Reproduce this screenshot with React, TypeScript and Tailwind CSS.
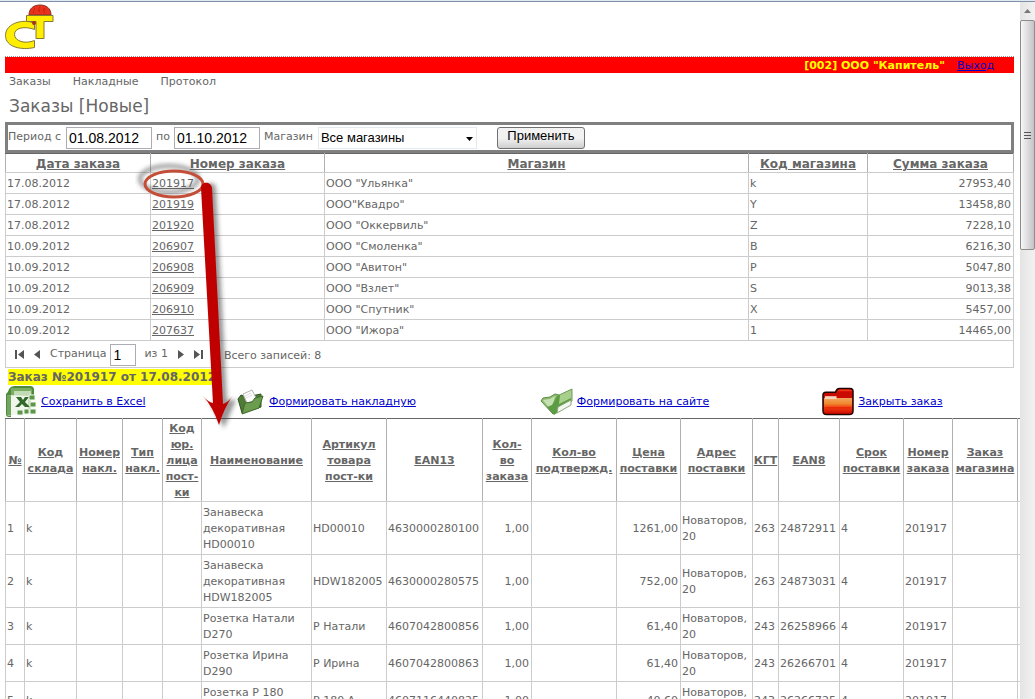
const orders = [
  { date: '17.08.2012', number: '201917', shop: 'ООО "Ульянка"', code: 'k', total: '27953,40' },
  { date: '17.08.2012', number: '201919', shop: 'ООО"Квадро"', code: 'Y', total: '13458,80' },
  { date: '17.08.2012', number: '201920', shop: 'ООО "Оккервиль"', code: 'Z', total: '7228,10' },
  { date: '10.09.2012', number: '206907', shop: 'ООО "Смоленка"', code: 'B', total: '6216,30' },
  { date: '10.09.2012', number: '206908', shop: 'ООО "Авитон"', code: 'P', total: '5047,80' },
  { date: '10.09.2012', number: '206909', shop: 'ООО "Взлет"', code: 'S', total: '9013,38' },
  { date: '10.09.2012', number: '206910', shop: 'ООО "Спутник"', code: 'X', total: '5457,00' },
  { date: '10.09.2012', number: '207637', shop: 'ООО "Ижора"', code: '1', total: '14465,00' },
];

const columns = [
  { title: '№', width: 'w-[19px]' },
  { title: 'Код\nсклада', width: 'w-[52px]' },
  { title: 'Номер\nнакл.', width: 'w-[46px]' },
  { title: 'Тип\nнакл.', width: 'w-[40px]' },
  { title: 'Код\nюр.\nлица\nпост-\nки', width: 'w-[39px]' },
  { title: 'Наименование', width: 'w-[110px]' },
  { title: 'Артикул\nтовара\nпост-ки', width: 'w-[75px]' },
  { title: 'EAN13', width: 'w-[96px]' },
  { title: 'Кол-\nво\nзаказа', width: 'w-[49px]' },
  { title: 'Кол-во\nподтвержд.', width: 'w-[85px]' },
  { title: 'Цена\nпоставки', width: 'w-[64px]' },
  { title: 'Адрес\nпоставки', width: 'w-[72px]' },
  { title: 'КГТ', width: 'w-[26px]' },
  { title: 'EAN8', width: 'w-[61px]' },
  { title: 'Срок\nпоставки', width: 'w-[64px]' },
  { title: 'Номер\nзаказа', width: 'w-[49px]' },
  { title: 'Заказ\nмагазина', width: 'w-[65px]' },
  { title: '', width: 'w-[40px]' },
];

const items = [
  { name: 'Занавеска\nдекоративная\nHD00010', article: 'HD00010', ean: '4630000280100', price: '1261,00', kgt: '263', ean8: '24872911' },
  { name: 'Занавеска\nдекоративная\nHDW182005', article: 'HDW182005', ean: '4630000280575', price: '752,00', kgt: '263', ean8: '24873031' },
  { name: 'Розетка Натали\nD270', article: 'Р Натали', ean: '4607042800856', price: '61,40', kgt: '243', ean8: '26258966' },
  { name: 'Розетка Ирина\nD290', article: 'Р Ирина', ean: '4607042800863', price: '61,40', kgt: '243', ean8: '26266701' },
  { name: 'Розетка Р 180\nA', article: 'Р 180 А', ean: '4607116440825', price: '40,60', kgt: '243', ean8: '26266725' },
];

const th = 'border border-[#b0b0b0] border-t-[#666] border-b-[#ccc] px-0 pt-[2px] pb-0 font-bold text-center align-middle';
const td = 'border border-[#ccc] pl-px pr-[2px] pt-[3px] pb-px align-middle';
const field = "border border-[#abadb3] bg-white px-[2px] font-['Liberation_Sans',sans-serif] text-[14px] text-black";

function Logo() {
  return (
    <svg width="50" height="46" viewBox="0 0 50 46" aria-hidden="true">
      <path d="M24 11C24 4 29 1 35 1s11 3 11 10z" fill="#e8321c" stroke="#8a3020" strokeWidth="1" />
      <path d="M29 5h1m4-1h1m4 1h1m-12 3h1m5-1h1m4 1h1m-7-2h1m4 0h1" stroke="#a01808" strokeWidth="1" />
      <path
        d="M29.500 19.500C21 14.500 0.500 18 0.500 31.500C0.500 43 16 46.500 29.500 43.500V36.500C20 40.500 9.500 37 9.500 30.500C9.500 23.500 20 22 29.500 25.500Z"
        fill="#ffee00"
        stroke="#857a35"
        strokeWidth="1"
      />
      <path d="M21.500 11.500h26.500v6h-9v17h-8v-17H21.500z" fill="#ffee00" stroke="#857a35" strokeWidth="1" />
      <circle cx="29" cy="19" r="2" fill="#a83218" />
    </svg>
  );
}

function ExcelIcon() {
  return (
    <svg width="32" height="32" viewBox="0 0 32 32" aria-hidden="true">
      <path d="M4 3Q6 0 10 0h15q4 0 4 4v8H1z" fill="#4f8a3c" />
      <path d="M7 2h18q2 0 2 2v6H5V5q0-3 2-3z" fill="#79ad62" />
      <path d="M1 8l5-5v28H4q-3 0-3-3z" fill="#4f8a3c" />
      <path d="M9 5h17v22H9z" fill="#c3dbb5" />
      <path d="M3 9l20 1v16L3 30z" fill="#f1f6ec" />
      <path d="M2 9l4 .2V29l-4 1z" fill="#72a55e" />
      <path d="M11 11h5l2 3 2-3h4l-4 5 5 5h-5l-3-3-3 3h-4l5-5z" fill="#32682a" />
      <path d="M24 9h6v5h-6zM25 16h6v5h-6zM25 23h6v5h-6zM19 23h5v5h-5zM12 24h6v5h-6z" fill="#5d954a" stroke="#f1f6ec" />
    </svg>
  );
}

function GreenFolderIcon() {
  return (
    <svg width="28" height="28" viewBox="0 0 28 28" aria-hidden="true">
      <path d="M1 11l3-4 5 2 15-3v13L5 25z" fill="#4f7a38" stroke="#31551f" />
      <path d="M6 6l9-4 5 10-10 3z" fill="#fff" stroke="#b5b5b5" />
      <path d="M8 8l6-3M9 10l6-3" stroke="#ddd" />
      <path d="M8 15l7-1 3-4 8-2-4 12L5 26z" fill="#6c9c4d" stroke="#3f6b2c" />
    </svg>
  );
}

function CheckFolderIcon() {
  return (
    <svg width="33" height="28" viewBox="0 0 33 28" aria-hidden="true">
      <path d="M17 8l15-7v12l-14 9z" fill="#a8cf8c" stroke="#6f9a58" />
      <path d="M1 13l2-3 7-1 5-3 4 1-1 8-5 11z" fill="#8fbd70" stroke="#5d8c48" />
      <path d="M3 12l7-1 5-3-2 9-3 4z" fill="#c5e0b2" />
      <path d="M7 19l5-2 5-9 3-1-1 9 12-6v6L14 27z" fill="#5c9c42" />
      <path d="M18 19l13-7v5l-14 8z" fill="#f5f7f3" stroke="#8aa87a" />
    </svg>
  );
}

function RedFolderIcon() {
  return (
    <svg width="32" height="29" viewBox="0 0 33 29" aria-hidden="true">
      <defs>
        <linearGradient id="red-folder" x1="0" y1="0" x2="0" y2="1">
          <stop offset="0" stopColor="#f3a35c" />
          <stop offset="0.35" stopColor="#f08a30" />
          <stop offset="0.6" stopColor="#f04010" />
          <stop offset="1" stopColor="#c80a00" />
        </linearGradient>
      </defs>
      <path d="M1 8q0-3 3-3h10q1-4 4-4h11q3 0 3 3v20q0 4-4 4H5q-4 0-4-4z" fill="#c80a00" stroke="#1c0500" strokeWidth="1.5" />
      <path d="M16 4q1-2 3-2h9q3 0 3 2H16z" fill="#ef3518" />
      <path d="M2 11h29v13q0 3-3 3H5q-3 0-3-3z" fill="url(#red-folder)" />
      <path d="M3 9h12v3H3z" fill="#f6d5c0" />
      <path d="M3 24h27M3 21h27" stroke="#e82008" />
    </svg>
  );
}

const actions = [
  { title: 'Сохранить в Excel', icon: <ExcelIcon /> },
  { title: 'Формировать накладную', icon: <GreenFolderIcon /> },
  { title: 'Формировать на сайте', icon: <CheckFolderIcon /> },
  { title: 'Закрыть заказ', icon: <RedFolderIcon /> },
];

function PagerButton({ label, d }: { label: string; d: string }) {
  return (
    <button type="button" aria-label={label} className="flex h-4 w-[18px] items-center justify-center">
      <svg width="9" height="9" viewBox="0 0 9 9" fill="#555">
        <path d={d} />
      </svg>
    </button>
  );
}

/* Marker ellipse and arrow from the order number to its details */
function Annotation() {
  return (
    <svg className="pointer-events-none absolute left-[135px] top-[160px]" width="110" height="275" viewBox="135 160 110 275" aria-hidden="true">
      <defs>
        <filter id="soft" x="-50%" y="-50%" width="200%" height="200%">
          <feGaussianBlur stdDeviation="2" />
        </filter>
      </defs>
      <ellipse cx="169" cy="179" rx="29" ry="13" fill="none" stroke="#555" strokeOpacity="0.6" strokeWidth="4" filter="url(#soft)" />
      <path d="M206 188a5 5 0 0 1 10 0L227 400l9 0-12 28-14-26 6 4z" fill="#333" fillOpacity="0.5" filter="url(#soft)" />
      <ellipse cx="174" cy="184" rx="29" ry="13" fill="none" stroke="#c44f38" strokeWidth="3" />
      <path
        d="M201 188C201 181 211 181 212 188L223 404Q229 402 233 395Q224 408 219 425Q213 407 203 396Q208 402 213 403Z"
        fill="#c00000"
      />
    </svg>
  );
}

function Header() {
  return (
    <header>
      <div className="flex h-[54px] items-start pt-[2px]">
        <Logo />
      </div>
      <div className="mr-[6px] flex h-[17px] items-center justify-end gap-3 border-t border-dotted border-[#999] bg-[#f00] bg-clip-padding pr-5 pt-px leading-4">
        <strong className="text-[#ff0]">[002] ООО "Капитель"</strong>
        <a href="#logout" className="text-[#0000cc] underline">Выход</a>
      </div>
      <nav className="flex gap-[22px] px-1 pt-px leading-4">
        <a href="#orders">Заказы</a>
        <a href="#invoices">Накладные</a>
        <a href="#log">Протокол</a>
      </nav>
      <h1 className="px-1 py-1 text-[17px] leading-6">Заказы [Новые]</h1>
    </header>
  );
}

function Filter() {
  return (
    <form className="mr-[6px] flex h-[31px] items-center border-[3px] border-[#808080]">
      <label htmlFor="from" className="mr-[5px]">Период с</label>
      <input id="from" defaultValue="01.08.2012" className={`${field} h-[22px] w-[86px]`} />
      <label htmlFor="to" className="mx-1">по</label>
      <input id="to" defaultValue="01.10.2012" className={`${field} h-[22px] w-[86px]`} />
      <label htmlFor="shop" className="ml-1 mr-[5px]">Магазин</label>
      <div className="relative">
        <select
          id="shop"
          className="h-[22px] w-[159px] appearance-none border border-[#e3e9ef] bg-white px-[2px] font-['Liberation_Sans',sans-serif] text-[13px] leading-5 text-black"
        >
          <option>Все магазины</option>
        </select>
        <svg className="pointer-events-none absolute right-1 top-[10px]" width="7" height="4" viewBox="0 0 7 4" aria-hidden="true">
          <path d="M0 0h7L3.500 4z" fill="#000" />
        </svg>
      </div>
      <button
        type="button"
        className="ml-5 h-[22px] w-[88px] rounded-[3px] border border-[#707070] bg-gradient-to-b from-[#f2f2f2] from-50% to-[#cfcfcf] pb-1 font-['Liberation_Sans',sans-serif] text-[13px] leading-4 text-black"
      >
        Применить
      </button>
    </form>
  );
}

function Orders() {
  return (
    <section className="mr-[6px]">
      <table className="w-full table-fixed border-collapse leading-4">
        <thead className="text-[12px]">
          <tr>
            <th className={`${th} w-[145px]`}><a href="#date" className="underline">Дата заказа</a></th>
            <th className={`${th} w-[174px]`}><a href="#number" className="underline">Номер заказа</a></th>
            <th className={th}><a href="#shop-name" className="underline">Магазин</a></th>
            <th className={`${th} w-[119px]`}><a href="#code" className="underline">Код магазина</a></th>
            <th className={`${th} w-[146px]`}><a href="#total" className="underline">Сумма заказа</a></th>
          </tr>
        </thead>
        <tbody>
          {orders.map((order) => (
            <tr key={order.number}>
              <td className={td}>{order.date}</td>
              <td className={td}><a href={`#${order.number}`} className="underline">{order.number}</a></td>
              <td className={td}>{order.shop}</td>
              <td className={td}>{order.code}</td>
              <td className={`${td} text-right`}>{order.total}</td>
            </tr>
          ))}
        </tbody>
      </table>
      <div className="flex h-[27px] items-center border border-t-0 border-[#ccc] pl-1 pt-px">
        <PagerButton label="Первая" d="M0 0h2v9H0zM9 0v9L3 4.500z" />
        <PagerButton label="Предыдущая" d="M7 0v9L1 4.500z" />
        <label htmlFor="page" className="mx-1">Страница</label>
        <input id="page" defaultValue="1" className={`${field} h-[22px] w-[26px]`} />
        <span className="ml-2 mr-1">из 1</span>
        <PagerButton label="Следующая" d="M2 0v9l6-4.500z" />
        <PagerButton label="Последняя" d="M0 0v9l6-4.500zM7 0h2v9H7z" />
        <span className="ml-4 pt-1">Всего записей: 8</span>
      </div>
    </section>
  );
}

function Details() {
  return (
    <section>
      <h2 className="px-[3px] pt-px text-[12px] font-bold leading-4">
        <span className="inline-block bg-[#ff0]">Заказ №201917 от 17.08.2012</span>
      </h2>
      <div className="mr-[6px] grid h-[33px] grid-cols-[23fr_30fr_28fr_19fr] items-center">
        {actions.map((action) => (
          <a key={action.title} href="#action" className="flex items-center gap-1 text-[#0000cc] underline">
            {action.icon}
            <span className="pt-[2px]">{action.title}</span>
          </a>
        ))}
      </div>
      <table className="w-[1053px] table-fixed border-collapse leading-4">
        <thead>
          <tr>
            {columns.map((column) => (
              <th key={column.title} className={`${th} ${column.width} whitespace-pre`}>
                <a href="#sort" className="underline">{column.title}</a>
              </th>
            ))}
          </tr>
        </thead>
        <tbody>
          {items.map((item, i) => (
            <tr key={item.ean}>
              <td className={td}>{i + 1}</td>
              <td className={td}>k</td>
              <td className={td}></td>
              <td className={td}></td>
              <td className={td}></td>
              <td className={`${td} whitespace-pre`}>{item.name}</td>
              <td className={td}>{item.article}</td>
              <td className={td}>{item.ean}</td>
              <td className={`${td} text-right`}>1,00</td>
              <td className={td}></td>
              <td className={`${td} text-right`}>{item.price}</td>
              <td className={td}>Новаторов, 20</td>
              <td className={td}>{item.kgt}</td>
              <td className={td}>{item.ean8}</td>
              <td className={td}>4</td>
              <td className={td}>201917</td>
              <td className={td}></td>
              <td className={td}></td>
            </tr>
          ))}
        </tbody>
      </table>
    </section>
  );
}

function Scrollbar() {
  return (
    <div className="flex w-[15px] shrink-0 flex-col items-center bg-gradient-to-r from-[#e4e4e4] to-[#f2f2f2]" aria-hidden="true">
      <div className="flex h-[18px] items-center">
        <svg width="7" height="4" viewBox="0 0 7 4">
          <path d="M0 4h7L3.500 0z" fill="#777" />
        </svg>
      </div>
      <div className="flex h-[33%] w-full flex-col items-center justify-center gap-[2px] rounded-[2px] border border-[#8c8c8c] bg-gradient-to-r from-[#f7f7f7] to-[#c4c4c8]">
        <span className="h-px w-[7px] bg-[#555]" />
        <span className="h-px w-[7px] bg-[#555]" />
        <span className="h-px w-[7px] bg-[#555]" />
      </div>
    </div>
  );
}

export default function App() {
  return (
    <div className="relative flex h-screen flex-col overflow-hidden bg-white font-['DejaVu_Sans',sans-serif] text-[11px] text-[#666]">
      <div className="h-[2px] shrink-0 border-b border-[#8090a8] bg-[#dfe8f3]" />
      <div className="flex min-h-0 flex-1">
        <main className="min-w-0 flex-1 overflow-hidden pl-[5px]">
          <Header />
          <Filter />
          <Orders />
          <Details />
        </main>
        <Scrollbar />
      </div>
      <Annotation />
    </div>
  );
}
